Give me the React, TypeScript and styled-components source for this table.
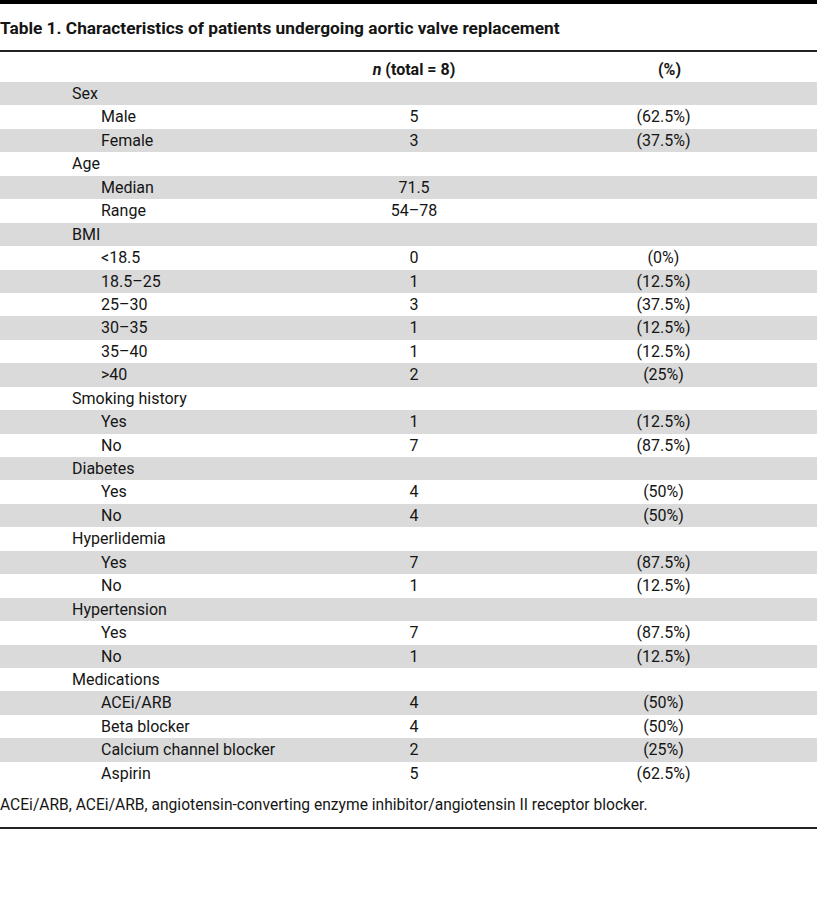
import React from "react";
import styled, { createGlobalStyle } from "styled-components";

const GlobalStyle = createGlobalStyle`
  body {
    margin: 0;
    background: #fff;
    color: #151515;
    font-family: Roboto, "Liberation Sans", sans-serif;
  }
`;

const Page = styled.div`
  width: 817px;
  border-top: 4px solid #000;
`;

const Title = styled.h1`
  margin: 0;
  height: 48px;
  padding-top: 2px;
  box-sizing: border-box;
  display: flex;
  align-items: center;
  font-size: 17.3px;
  font-weight: 700;
  border-bottom: 2px solid #222;
`;

const Grid = styled.div`
  display: grid;
  grid-template-columns: 344px 140px 1fr;
  font-size: 16px;
`;

const HeadCell = styled.div<{ $offset?: number }>`
  height: 30px;
  padding-top: 8px;
  box-sizing: border-box;
  line-height: 20px;
  font-size: 16px;
  font-weight: 700;
  text-align: center;
  padding-left: ${(p) => p.$offset ?? 0}px;

  em {
    font-style: italic;
  }
`;

const Cell = styled.div<{ $shade: boolean }>`
  height: 23.45px;
  line-height: 23.45px;
  white-space: nowrap;
  background: ${(p) => (p.$shade ? "#dadada" : "#fff")};
`;

const LabelCell = styled(Cell)<{ $indent: boolean }>`
  padding-left: ${(p) => (p.$indent ? 101 : 72)}px;
`;

const CountCell = styled(Cell)`
  text-align: center;
`;

const PercentCell = styled(Cell)`
  text-align: center;
  padding-left: 26px;
`;

const Footnote = styled.p`
  margin: 0;
  height: 44px;
  padding-top: 8px;
  box-sizing: border-box;
  font-size: 15.6px;
  line-height: 24px;
  border-bottom: 2px solid #222;
`;

type Row = { label: string; sub?: boolean; n?: string; pct?: string };

const rows: Row[] = [
  { label: "Sex" },
  { label: "Male", sub: true, n: "5", pct: "(62.5%)" },
  { label: "Female", sub: true, n: "3", pct: "(37.5%)" },
  { label: "Age" },
  { label: "Median", sub: true, n: "71.5" },
  { label: "Range", sub: true, n: "54–78" },
  { label: "BMI" },
  { label: "<18.5", sub: true, n: "0", pct: "(0%)" },
  { label: "18.5–25", sub: true, n: "1", pct: "(12.5%)" },
  { label: "25–30", sub: true, n: "3", pct: "(37.5%)" },
  { label: "30–35", sub: true, n: "1", pct: "(12.5%)" },
  { label: "35–40", sub: true, n: "1", pct: "(12.5%)" },
  { label: ">40", sub: true, n: "2", pct: "(25%)" },
  { label: "Smoking history" },
  { label: "Yes", sub: true, n: "1", pct: "(12.5%)" },
  { label: "No", sub: true, n: "7", pct: "(87.5%)" },
  { label: "Diabetes" },
  { label: "Yes", sub: true, n: "4", pct: "(50%)" },
  { label: "No", sub: true, n: "4", pct: "(50%)" },
  { label: "Hyperlidemia" },
  { label: "Yes", sub: true, n: "7", pct: "(87.5%)" },
  { label: "No", sub: true, n: "1", pct: "(12.5%)" },
  { label: "Hypertension" },
  { label: "Yes", sub: true, n: "7", pct: "(87.5%)" },
  { label: "No", sub: true, n: "1", pct: "(12.5%)" },
  { label: "Medications" },
  { label: "ACEi/ARB", sub: true, n: "4", pct: "(50%)" },
  { label: "Beta blocker", sub: true, n: "4", pct: "(50%)" },
  { label: "Calcium channel blocker", sub: true, n: "2", pct: "(25%)" },
  { label: "Aspirin", sub: true, n: "5", pct: "(62.5%)" },
];

const App = () => {
  return (
    <Page>
      <GlobalStyle />
      <Title>Table 1. Characteristics of patients undergoing aortic valve replacement</Title>
      <Grid>
        <HeadCell />
        <HeadCell $offset={-10}>
          <em>n</em> (total = 8)
        </HeadCell>
        <HeadCell $offset={38}>(%)</HeadCell>
        {rows.map((r, i) => {
          const shade = i % 2 === 0;
          return (
            <React.Fragment key={i}>
              <LabelCell $shade={shade} $indent={!!r.sub}>
                {r.label}
              </LabelCell>
              <CountCell $shade={shade}>{r.n}</CountCell>
              <PercentCell $shade={shade}>{r.pct}</PercentCell>
            </React.Fragment>
          );
        })}
      </Grid>
      <Footnote>
        ACEi/ARB, ACEi/ARB, angiotensin-converting enzyme inhibitor/angiotensin II receptor blocker.
      </Footnote>
    </Page>
  );
};

export default App;
